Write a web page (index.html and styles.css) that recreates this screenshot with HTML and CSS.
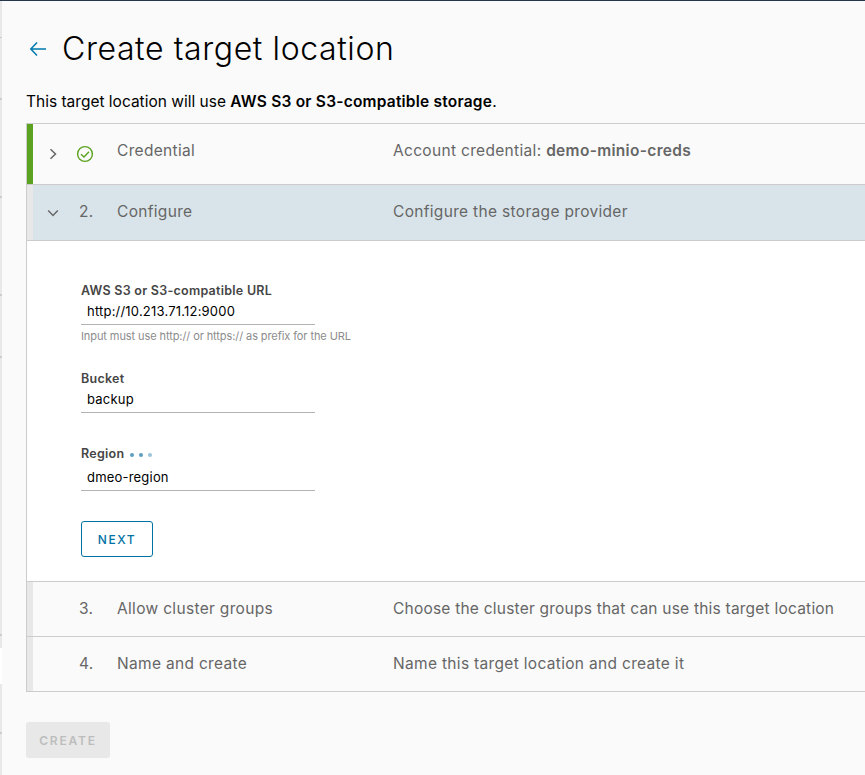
FILE: index.html
```html
<!DOCTYPE html>
<html lang="en">
<head>
<meta charset="utf-8">
<title>Create target location</title>
<link rel="stylesheet" href="styles.css">
</head>
<body>
<div class="topbar"></div>
<div class="shell">
  <nav class="rail">
    <i class="g1"></i><i class="g2"></i><i class="g3"></i><i class="g3"></i><i class="g4"></i><i class="g5"></i><b></b><i class="g6"></i>
  </nav>
  <main class="page">
    <header class="heading">
      <svg class="back" viewBox="0 0 18 16" width="18" height="16"><path d="M17 8H2M8 1.5L1.8 8L8 14.5"/></svg>
      <h1>Create target location</h1>
    </header>
    <p class="intro">This target location will use <strong>AWS S3 or S3-compatible storage</strong>.</p>
    <section class="steps">
      <div class="step done">
        <span class="caret"><svg viewBox="0 0 12 12" width="12" height="12"><path d="M3.5 1.2L8.5 6L3.5 10.8"/></svg></span>
        <span class="num"><svg class="check" viewBox="0 0 18 18" width="18" height="18"><circle cx="9" cy="9" r="7.4"/><path d="M5 9.2L8 12L13 6.8"/></svg></span>
        <span class="name">Credential</span>
        <span class="desc">Account credential: <strong>demo-minio-creds</strong></span>
      </div>
      <div class="step active">
        <span class="caret"><svg viewBox="0 0 12 12" width="12" height="12"><path d="M1.2 3.5L6 8.5L10.8 3.5"/></svg></span>
        <span class="num">2.</span>
        <span class="name">Configure</span>
        <span class="desc">Configure the storage provider</span>
      </div>
      <form class="panel">
        <div class="field url">
          <label>AWS S3 or S3-compatible URL</label>
          <div class="value">http://10.213.71.12:9000</div>
          <small>Input must use http:// or https:// as prefix for the URL</small>
        </div>
        <div class="field bucket">
          <label>Bucket</label>
          <div class="value">backup</div>
        </div>
        <div class="field region">
          <label>Region <span class="dots"><i></i><i></i><i></i></span></label>
          <div class="value">dmeo-region</div>
        </div>
        <button type="button" class="next">NEXT</button>
      </form>
      <div class="step">
        <span class="caret"></span>
        <span class="num">3.</span>
        <span class="name">Allow cluster groups</span>
        <span class="desc long">Choose the cluster groups that can use this target location</span>
      </div>
      <div class="step">
        <span class="caret"></span>
        <span class="num">4.</span>
        <span class="name">Name and create</span>
        <span class="desc">Name this target location and create it</span>
      </div>
    </section>
    <button type="button" class="create" disabled>CREATE</button>
  </main>
</div>
</body>
</html>
```
FILE: styles.css
```css
* { box-sizing: border-box; }
body { margin: 0; height: 775px; overflow: hidden; background: #fafafa; color: #000; font-family: Inter, "Open Sans", sans-serif; }
.topbar { height: 1px; background: #25384b; }
.shell { display: flex; height: 774px; }
.rail { width: 2px; background: #e8e8e8; display: flex; flex-direction: column; }
.rail i { height: 2px; background: #ccc; flex: none; }
.rail b { height: 36px; margin-top: 12px; background: #fff; }
.rail .g1 { height: 1px; margin-top: 36px; }
.rail .g2 { margin-top: 60px; }
.rail .g3 { margin-top: 96px; }
.rail .g4 { margin-top: 60px; }
.rail .g5 { margin-top: 276px; }
.rail .g6 { margin-top: 48px; }
.page { flex: 1; min-width: 0; padding-left: 24px; }
.heading { display: flex; align-items: center; height: 64px; margin-top: 16px; padding-left: 3px; }
.back { fill: none; stroke: #0079ad; stroke-width: 1.5; }
h1 { margin: 0 0 0 15px; font-size: 32px; line-height: 40px; font-weight: 300; letter-spacing: .6px; white-space: nowrap; }
.intro { margin: 9px 0 0; font-size: 15.5px; line-height: 24px; height: 33px; letter-spacing: 0; white-space: nowrap; }
strong { font-weight: 600; }
.intro strong { letter-spacing: .22px; }
.steps { border: 1px solid #ccc; border-right: 0; }
.step { display: flex; height: 55px; border-bottom: 1px solid #ccc; font-size: 15.5px; line-height: 54px; letter-spacing: .32px; color: #666; white-space: nowrap; }
.step::before { content: ""; width: 6px; background: #e8e8e8; }
.step:last-child { height: 54px; border-bottom: 0; }
.step.done { height: 61px; }
.step.done::before { background: #5aa220; }
.step.active { height: 56px; background: #d9e4ea; }
.caret { width: 46px; padding-left: 14px; display: flex; align-items: center; }
.caret svg { fill: none; stroke: #666; stroke-width: 1.5; }
.num { width: 38px; }
.done .num { display: flex; align-items: center; }
.check { margin-left: -3px; fill: none; stroke: #5aa220; stroke-width: 1.4; }
.name { width: 276px; }
.desc.long { letter-spacing: .22px; }
.panel { height: 341px; margin: 0; padding: 40px 0 0 54px; background: #fff; border-bottom: 1px solid #ccc; }
.field { width: 234px; }
label { display: flex; align-items: center; height: 18px; font-size: 12.5px; font-weight: 600; letter-spacing: .26px; color: #454545; white-space: nowrap; }
.value { height: 26px; padding-left: 6px; border-bottom: 1px solid #b3b3b3; font-size: 13px; line-height: 24px; letter-spacing: .2px; white-space: nowrap; }
small { display: block; height: 24px; font-size: 11px; line-height: 22px; letter-spacing: -.09px; color: #8c8c8c; white-space: nowrap; }
.url { height: 88px; }
.bucket { height: 75px; }
.region .value { margin-top: 3px; }
.dots { display: flex; gap: 5px; margin: 3px 0 0 6px; }
.dots i { width: 4px; height: 4px; border-radius: 50%; background: #5a9fbe; }
.dots i:last-child { background: #9bc5d8; }
button { display: block; height: 36px; padding: 0; font: 500 12px Inter, sans-serif; letter-spacing: 1.6px; border-radius: 3px; }
.next { width: 72px; margin-top: 30px; border: 1px solid #0072a3; background: #fff; color: #0072a3; }
.create { width: 84px; margin-top: 30px; border: 0; background: #e8e8e8; color: #bdbdbd; font-weight: 600; letter-spacing: 1.8px; }
```
